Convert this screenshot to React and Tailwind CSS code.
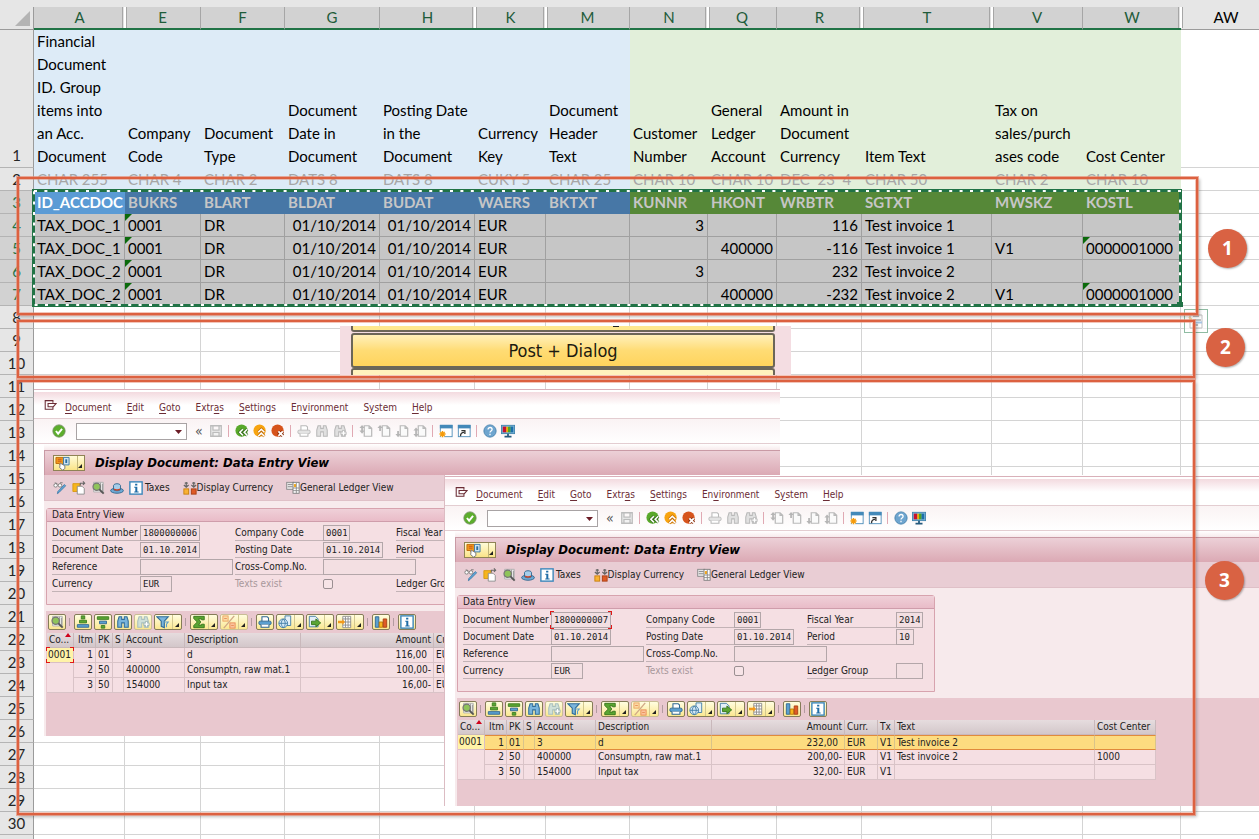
import React from "react";

const COLUMNS = [
  { id: "A", w: "w-[91px]", title: "Financial Document ID. Group items into an Acc. Document", type: "CHAR 255", field: "ID_ACCDOC", hiddenAfter: true },
  { id: "E", w: "w-[76px]", title: "Company Code", type: "CHAR 4", field: "BUKRS" },
  { id: "F", w: "w-[84px]", title: "Document Type", type: "CHAR 2", field: "BLART" },
  { id: "G", w: "w-[95px]", title: "Document Date in Document", type: "DATS 8", field: "BLDAT", right: true },
  { id: "H", w: "w-[95px]", title: "Posting Date in the Document", type: "DATS 8", field: "BUDAT", right: true, hiddenAfter: true },
  { id: "K", w: "w-[71px]", title: "Currency Key", type: "CUKY 5", field: "WAERS", hiddenAfter: true },
  { id: "M", w: "w-[84px]", title: "Document Header Text", type: "CHAR 25", field: "BKTXT" },
  { id: "N", w: "w-[78px]", title: "Customer Number", type: "CHAR 10", field: "KUNNR", green: true, right: true, hiddenAfter: true },
  { id: "Q", w: "w-[69px]", title: "General Ledger Account", type: "CHAR 10", field: "HKONT", green: true, right: true },
  { id: "R", w: "w-[85px]", title: "Amount in Document Currency", type: "DEC  23  4", field: "WRBTR", green: true, right: true, hiddenAfter: true },
  { id: "T", w: "w-[130px]", title: "Item Text", type: "CHAR 50", field: "SGTXT", green: true, hiddenAfter: true },
  { id: "V", w: "w-[91px]", title: "Tax on sales/purch ases code", type: "CHAR 2", field: "MWSKZ", green: true },
  { id: "W", w: "w-[98px]", title: "Cost Center", type: "CHAR 10", field: "KOSTL", green: true, hiddenAfter: true },
];

const DATA = [
  ["TAX_DOC_1", "0001", "DR", "01/10/2014", "01/10/2014", "EUR", "", "3", "", "116", "Test invoice 1", "", ""],
  ["TAX_DOC_1", "0001", "DR", "01/10/2014", "01/10/2014", "EUR", "", "", "400000", "-116", "Test invoice 1", "V1", "0000001000"],
  ["TAX_DOC_2", "0001", "DR", "01/10/2014", "01/10/2014", "EUR", "", "3", "", "232", "Test invoice 2", "", ""],
  ["TAX_DOC_2", "0001", "DR", "01/10/2014", "01/10/2014", "EUR", "", "", "400000", "-232", "Test invoice 2", "V1", "0000001000"],
];

// rows 8 to 30, then one unnumbered row under them
const EMPTY_ROWS = [...Array.from({ length: 23 }, (_, i) => i + 8), ""];

/* ---------- icons ---------- */

const pageShape = <path d="M6 2h5.500l3 3v9H6zM11.500 2v3h3" fill="#fafafa" stroke="#b9b9b9" strokeWidth="1.400" />;
const binoculars = (fill, stroke) => (
  <path d="M3.500 2h3v3h3V2h3l1.500 5v7H9.500V9h-3v5H2V7z" fill={fill} stroke={stroke} strokeWidth="1.200" />
);
const printer = (body, line) => (
  <>
    <path d="M4.500 7V2h6l1.500 1.500V7" fill="#fff" stroke={line} strokeWidth="1.200" />
    <rect x="1" y="7" width="14" height="4" rx="1.500" fill={body} stroke={line} />
    <path d="M3.500 11v3h9v-3" fill="#fff" stroke={line} strokeWidth="1.200" />
  </>
);
const magnifier = (
  <>
    <path d="M3 1.500h11v11H3z" fill="#fff" stroke="#aaa" />
    <path d="M11 2v10M13 3v9" stroke="#888" strokeWidth="1" />
    <circle cx="6.500" cy="6.500" r="4.200" fill="#8fc45a" stroke="#777" strokeWidth="1.400" />
    <path d="M9.500 9.500l5 5" stroke="#555" strokeWidth="2.200" />
  </>
);

const ICONS = {
  exit: <path d="M11 4.500V2H1.500v10.500H11V10M5 5.500h10L11.500 9.500H5z" fill="none" stroke="#6b2c35" strokeWidth="1.300" />,
  check: (
    <>
      <circle cx="8" cy="8" r="7" fill="#5cae2c" stroke="#6f8d5c" />
      <path d="M4.500 8l2.500 3 4.500-5.500" fill="none" stroke="#fff" strokeWidth="2.200" />
    </>
  ),
  save: <path d="M2 2h12v12H2zM4.500 2v5h7V2M4.500 14V9.500h7V14" fill="#f2f2f2" stroke="#bcbcbc" strokeWidth="1.500" />,
  back: (
    <>
      <circle cx="7.500" cy="7.500" r="7" fill="#58a82a" />
      <path d="M9 6l-3.500 3.500L9 13M14 6l-3.500 3.500L14 13" fill="none" stroke="#356d1a" strokeWidth="3.400" />
      <path d="M9 6l-3.500 3.500L9 13M14 6l-3.500 3.500L14 13" fill="none" stroke="#fff" strokeWidth="1.800" />
    </>
  ),
  up: (
    <>
      <circle cx="7.500" cy="7.500" r="7" fill="#f7a410" />
      <path d="M6 9.500L9.500 6 13 9.500M6 14l3.500-3.500L13 14" fill="none" stroke="#c26a00" strokeWidth="3.400" />
      <path d="M6 9.500L9.500 6 13 9.500M6 14l3.500-3.500L13 14" fill="none" stroke="#fff" strokeWidth="1.800" />
    </>
  ),
  cancel: (
    <>
      <circle cx="7.500" cy="7.500" r="7" fill="#d6531b" />
      <path d="M8.500 8.500l5 5M13.500 8.500l-5 5" stroke="#8c2f0a" strokeWidth="4" />
      <path d="M8.500 8.500l5 5M13.500 8.500l-5 5" stroke="#fff" strokeWidth="2" />
    </>
  ),
  printGray: printer("#e3e3e3", "#b9b9b9"),
  print: printer("#5b9fd0", "#2d6692"),
  findGray: binoculars("#e0e0e0", "#b9b9b9"),
  find: binoculars("#78b4dc", "#2f6d9b"),
  findNextGray: (
    <>
      {binoculars("#e0e0e0", "#b9b9b9")}
      <path d="M12 7v7M8.500 10.500h7" stroke="#b9b9b9" strokeWidth="3.500" />
      <path d="M12 8v5M9.500 10.500h5" stroke="#fff" strokeWidth="1.500" />
    </>
  ),
  findNext: (
    <>
      {binoculars("#cfe0d8", "#a9c0bf")}
      <path d="M12 7v7M8.500 10.500h7" stroke="#9db5b5" strokeWidth="3.500" />
      <path d="M12 8v5M9.500 10.500h5" stroke="#fff" strokeWidth="1.500" />
    </>
  ),
  first: <>{pageShape}<path d="M3.500 1l3 3.500h-2v3h2l-3 3.500-3-3.500h2v-3h-2z" fill="#b5b5b5" /></>,
  prev: <>{pageShape}<path d="M3.500 1l3 3.500h-2V8h-2V4.500h-2z" fill="#b5b5b5" /></>,
  next: <>{pageShape}<path d="M3.500 15l3-3.500h-2V8h-2v3.500h-2z" fill="#b5b5b5" /></>,
  last: <>{pageShape}<path d="M3.500 4l3 3.500h-2v4h2l-3 3.500-3-3.500h2v-4h-2z" fill="#b5b5b5" /></>,
  session: (
    <>
      <rect x="1.500" y="1.500" width="13.500" height="13" fill="#fff" stroke="#4a8bb8" />
      <rect x="1" y="1" width="14.500" height="4" fill="#4389b9" />
      <path d="M4 7.500v8M0 11.500h8" stroke="#fff" strokeWidth="4" />
      <path d="M4 8v7M.500 11.500h7M1.500 9l5 5M6.500 9l-5 5" stroke="#f59b0b" strokeWidth="1.600" />
    </>
  ),
  shortcut: (
    <>
      <rect x="1.500" y="1.500" width="13.500" height="13" fill="#fff" stroke="#4a8bb8" />
      <rect x="1" y="1" width="14.500" height="4" fill="#4389b9" />
      <path d="M4 14c0-3 1-4.500 4-4.500M5 7.500h4v4" fill="none" stroke="#333" strokeWidth="1.500" />
    </>
  ),
  help: (
    <>
      <circle cx="8" cy="8" r="7" fill="#6ea5cf" stroke="#4681ad" />
      <path d="M5.800 6.200c0-3 4.600-2.800 4.600 0 0 1.800-2.400 1.800-2.400 3.600M8 11v1.800" fill="none" stroke="#fff" strokeWidth="1.500" />
    </>
  ),
  monitor: (
    <>
      <rect x=".5" y="1.500" width="15" height="9.500" fill="#7bb4d8" stroke="#3f83ad" />
      <path d="M2 3h4v6.500H2z" fill="#c8102e" />
      <path d="M6 3h2v6.500H6z" fill="#f0ab00" />
      <path d="M8 3h3v6.500H8z" fill="#4fa22a" />
      <path d="M11 3h3v6.500h-3z" fill="#1b6ea8" />
      <path d="M8 11v3M4 14.500h8" stroke="#24597c" strokeWidth="2" />
    </>
  ),
  glasses: (
    <>
      <circle cx="3" cy="5" r="2" fill="#fff" stroke="#777" />
      <circle cx="8" cy="5" r="2" fill="#fff" stroke="#777" />
      <path d="M2 2l3 1M8 2l3 0" stroke="#777" />
      <path d="M14.500 5.500L7 13l-2 1.500.500-2.500L13 4z" fill="#5fa6d6" stroke="#2f6f9d" strokeWidth=".8" />
    </>
  ),
  other: (
    <>
      <path d="M1 3h8v9H1z" fill="#f7b51d" stroke="#d9980f" />
      <path d="M6 6h5.500L14 8.500V15H6z" fill="#fff" stroke="#888" />
      <path d="M9.500 5V2.500H14M12.500.5l2 2-2 2" stroke="#666" strokeWidth="1.200" fill="none" />
    </>
  ),
  magnifier,
  hat: (
    <>
      <ellipse cx="8" cy="11" rx="7.300" ry="3" fill="#6fa9d4" stroke="#2c628c" />
      <path d="M4 10V5C5 2.500 11 2.500 12 5v5c-2 1.500-6 1.500-8 0z" fill="#a5cdea" stroke="#2c628c" />
      <path d="M4.500 8.500c2 1.200 5 1.200 7 0v1.700c-2 1.200-5 1.200-7 0z" fill="#c7442c" />
    </>
  ),
  info: (
    <>
      <rect x="1" y="1" width="14" height="14" fill="#fff" stroke="#3c87bb" strokeWidth="1.600" />
      <path d="M7 3h2.500v2H7zM6 6.500h3.500V12H11v1.200H6V12h1.200V7.800H6z" fill="#1f6ca6" />
    </>
  ),
  currency: (
    <>
      <rect x="1" y="9" width="5.500" height="6" fill="#f9b233" stroke="#c77e0a" />
      <rect x="9.500" y="9" width="5.500" height="6" fill="#df5a26" stroke="#a63d11" />
      <path d="M3.700 1v6M1 4.500L3.700 7l2.700-2.500M12.300 1v6M9.600 4.500L12.300 7 15 4.500M2 2.500h3.500M10.500 2.500H14" stroke="#666" strokeWidth="1.400" fill="none" />
    </>
  ),
  ledger: (
    <>
      <rect x=".8" y="1.500" width="8" height="8" fill="#e6e6e6" stroke="#888" />
      <path d="M2 4h5.500M2 6.500h5.500" stroke="#888" />
      <rect x="8" y="1.500" width="7" height="12.500" fill="#fff" stroke="#777" />
      <path d="M9 3.500h2.500V7H9z" fill="#f4a91c" />
      <path d="M8 8h7M8 11h7M11.800 2v12" stroke="#888" />
    </>
  ),
  bpm: (
    <>
      <path d="M1 1.500h8v6l-2.500 3.500L4.500 8H1z" fill="#f39a1c" stroke="#c06a08" />
      <path d="M3 3.500h4M3 5.500h4" stroke="#c8541a" />
      <path d="M9 1.500h6v8H9z" fill="#cfe4f2" stroke="#3b79a5" />
      <path d="M11 3.500h2v4h-2z" fill="#2e6d9c" />
      <path d="M5.500 7.500l5 3v3L8 15l-3-2.500z" fill="#fff" stroke="#777" />
    </>
  ),
  asc: (
    <>
      <path d="M6 1h4v3.500H6z" fill="#5aa532" stroke="#3c7d1f" />
      <path d="M4 6h8v3H4z" fill="#5aa532" stroke="#3c7d1f" />
      <path d="M1.500 11h13v3h-13z" fill="#5b9fd0" stroke="#2d6692" />
    </>
  ),
  desc: (
    <>
      <path d="M1.500 2h13v3h-13z" fill="#5aa532" stroke="#3c7d1f" />
      <path d="M4 7h8v3H4z" fill="#5b9fd0" stroke="#2d6692" />
      <path d="M6 12h4v3H6z" fill="#5aa532" stroke="#3c7d1f" />
    </>
  ),
  filter: (
    <>
      <path d="M1 2h13L9.500 7v7.500L6 13V7z" fill="#7cb6dc" stroke="#2f6d9b" strokeWidth="1.300" />
      <path d="M9 8h5l-2 2.500V14" fill="none" stroke="#5f9fc8" strokeWidth="1.200" />
    </>
  ),
  sum: <path d="M2 1.500h12v4h-3v-1H7.500L10 8l-2.500 3.500H11v-1h3v4H2V12l4-4-4-4z" fill="#5aa532" stroke="#35731a" />,
  subtotal: (
    <>
      <rect x="1" y="1" width="6" height="6" fill="#fbd9a4" stroke="#eba45c" />
      <rect x="9" y="9" width="6" height="6" fill="#fbc39c" stroke="#e88b55" />
      <path d="M14 1L2 15" stroke="#d0a886" strokeWidth="1.500" />
      <path d="M2.500 4h3M10.500 12h3" stroke="#e88b55" />
    </>
  ),
  view: (
    <>
      <path d="M8 1h6.500v11H8z" fill="#e4f0f8" stroke="#3b79a5" />
      <circle cx="6" cy="9.500" r="5" fill="#d4e8f5" stroke="#3b79a5" />
      <path d="M1 9.500h10M6 4.500c-3 3-3 7 0 10M6 4.500c3 3 3 7 0 10" fill="none" stroke="#3b79a5" />
    </>
  ),
  exportFile: (
    <>
      <path d="M1.500 1.500h7l3 3v9h-10z" fill="#e4f0f8" stroke="#3b79a5" />
      <path d="M4 7h5V4.500l5.500 4.500L9 13.500V11H4z" fill="#5aa532" stroke="#35731a" />
    </>
  ),
  layout: (
    <>
      <path d="M5.500 1.500h9v13h-9z" fill="#fff" stroke="#888" />
      <path d="M5.500 4.500h9M5.500 8h9M5.500 11.500h9M8.500 2v12M11.500 2v12" stroke="#888" />
      <path d="M0 6.500h5V4.500L8 8l-3 3.500v-2H0z" fill="#f39a1c" />
    </>
  ),
  chart: (
    <>
      <path d="M1.500 2h4v12h-4z" fill="#5b9fd0" stroke="#2d6692" />
      <path d="M6 8h4v6H6z" fill="#f7b51d" stroke="#b97708" />
      <path d="M10.500 4.500h4V14h-4z" fill="#df5a26" stroke="#a63d11" />
    </>
  ),
};

function Icon({ name, className = "size-[14px]" }) {
  return (
    <svg viewBox="0 0 16 16" className={`${className} shrink-0`} aria-hidden="true">
      {ICONS[name]}
    </svg>
  );
}

/* ---------- spreadsheet ---------- */

function RowHead({ n, selected }) {
  return (
    <th
      scope="row"
      className={`border-r border-b border-r-[#9b9b9b] border-b-[#b4b4b4] text-center align-bottom font-normal ${
        selected ? "bg-[#d2d2d2] text-[#217346]" : "bg-[#e6e6e6] text-[#262626]"
      }`}
    >
      {n}
    </th>
  );
}

function Sheet() {
  return (
    <table className="w-full table-fixed border-separate border-spacing-0 text-left leading-[22px]">
      <colgroup>
        <col className="w-[34px]" />
        {COLUMNS.map((c) => (
          <col key={c.id} className={c.w} />
        ))}
        <col />
      </colgroup>
      <thead>
        <tr className="h-[23px]">
          <th className="border-r border-b border-[#9b9b9b] bg-[#e6e6e6] p-0 pr-[3px]">
            <svg viewBox="0 0 15 15" className="ml-auto size-[15px]" aria-hidden="true">
              <path d="M15 0v15H0z" fill="#b4b4b4" />
            </svg>
          </th>
          {COLUMNS.map((c) => (
            <th
              key={c.id}
              scope="col"
              className={`relative border-b-2 border-b-[#217346] bg-[#d2d2d2] p-0 text-center font-normal leading-[21px] text-[#1e5c3a] ${
                c.hiddenAfter ? "" : "border-r border-r-[#a6a6a6]"
              }`}
            >
              {c.id}
              {c.hiddenAfter && (
                <span className="absolute top-0 -right-[2px] z-10 h-[21px] w-[5px] border-x border-[#a6a6a6] bg-linear-to-r from-[#d2d2d2] via-white to-white" />
              )}
            </th>
          ))}
          <th scope="col" className="border-b border-b-[#9b9b9b] bg-[#e6e6e6] pr-0 pl-3 text-center align-top font-normal leading-[21px]">
            AW
          </th>
        </tr>
      </thead>
      <tbody>
        <tr className="h-[138px] align-bottom leading-[23px]">
          <RowHead n={1} />
          {COLUMNS.map((c) => (
            <td key={c.id} className={`pr-[5px] pl-[3px] ${c.green ? "bg-[#e2efda]" : "bg-[#ddebf7]"}`}>
              {c.title}
            </td>
          ))}
          <td className="border-b border-[#d4d4d4]" />
        </tr>
        <tr className="h-[23px] align-top">
          <RowHead n={2} />
          {COLUMNS.map((c) => (
            <td key={c.id} className={`pl-[3px] whitespace-pre text-[#a6a6a6] ${c.green ? "bg-[#e2efda]" : "bg-[#ddebf7]"}`}>
              {c.type}
            </td>
          ))}
          <td className="border-b border-[#d4d4d4]" />
        </tr>
        <tr className="h-[23px] align-top font-bold text-[#c6c6c6]">
          <RowHead n={3} selected />
          {COLUMNS.map((c, i) => (
            <td
              key={c.id}
              className={`pl-[3px] ${i === 0 ? "bg-[#5b9bd5] text-white" : c.green ? "bg-[#568838]" : "bg-[#4777a6]"}`}
            >
              {c.field}
            </td>
          ))}
          <td className="border-b border-[#d4d4d4]" />
        </tr>
        {DATA.map((row, r) => (
          <tr key={r} className="h-[23px]">
            <RowHead n={r + 4} selected />
            {row.map((value, i) => (
              <td
                key={i}
                className={`relative border-r border-b border-[#a0a0a0] bg-[#c6c6c6] px-[3px] whitespace-nowrap ${
                  COLUMNS[i].right ? "text-right" : ""
                }`}
              >
                {(i === 1 || (i === 12 && value)) && (
                  <svg viewBox="0 0 7 7" className="absolute top-0 left-0 size-[7px]" aria-hidden="true">
                    <path d="M0 0h7L0 7z" fill="#0b6a0b" />
                  </svg>
                )}
                {value}
              </td>
            ))}
            <td className="border-b border-[#d4d4d4]" />
          </tr>
        ))}
        {EMPTY_ROWS.map((n) => (
          <tr key={n} className="h-[23px]">
            <RowHead n={n} />
            {COLUMNS.map((c) => (
              <td key={c.id} className="border-r border-b border-[#d4d4d4]" />
            ))}
            <td className="border-b border-[#d4d4d4]" />
          </tr>
        ))}
      </tbody>
    </table>
  );
}

// Copied range with the dashed outline
function CopyOutline() {
  return (
    <div className="absolute top-[189px] left-[32px] h-[118px] w-[1151px]">
      <svg className="size-full" aria-hidden="true">
        <rect x="1.5" y="1.5" width="1147" height="115" fill="none" stroke="#217346" strokeWidth="3" />
        <rect x="2" y="2" width="1146" height="114" fill="none" stroke="#fff" strokeWidth="2" strokeDasharray="3 7.400" />
        <rect x="1145" y="113" width="6" height="5" fill="#217346" />
      </svg>
    </div>
  );
}

function PasteOptions() {
  return (
    <button aria-label="Paste options" className="absolute top-[309px] left-[1184px] flex size-6 items-center justify-center border border-[#8fbca3] bg-white/70">
      <svg viewBox="0 0 16 16" className="size-4 opacity-60" aria-hidden="true">
        <path d="M2 2h12v13H2z" fill="#fff" stroke="#999" />
        <path d="M5 1h6v3H5z" fill="#999" />
        <path d="M5 7h8M5 12h5" stroke="#777" strokeWidth="1.500" />
        <path d="M7 9.500h7" stroke="#6c9ed1" strokeWidth="2" />
        <path d="M1 4l3 3M1 8l3-1" stroke="#eeb35e" strokeWidth="2" />
      </svg>
    </button>
  );
}

function PostDialog() {
  return (
    <div className="absolute top-[326px] left-[340px] flex h-[49px] w-[451px] flex-col overflow-hidden bg-[#f4dde2] pr-4 pl-[11px]">
      <div className="h-[6px] shrink-0 rounded-b-[3px] border-2 border-t-0 border-[#6b6658] bg-[#ffe88f]">
        <div className="ml-[260px] h-px w-[6px] bg-[#222]" />
      </div>
      <button className="mt-px h-[35px] shrink-0 rounded-[3px] border-2 border-[#6b6658] bg-linear-to-b from-[#fff0b8] via-[#ffdc74] via-50% to-[#ffd45c] font-['DejaVu_Sans_Condensed','DejaVu_Sans',sans-serif] text-[18px] leading-[31px] text-[#1c1a10]">
        Post + Dialog
      </button>
      <div className="h-5 shrink-0 rounded-t-[3px] border-2 border-b-0 border-[#6b6658] bg-[#fff2bd]" />
    </div>
  );
}

/* ---------- SAP windows ---------- */

const MENU = [
  ["", "D", "ocument"],
  ["", "E", "dit"],
  ["", "G", "oto"],
  ["Extr", "a", "s"],
  ["", "S", "ettings"],
  ["En", "v", "ironment"],
  ["S", "y", "stem"],
  ["", "H", "elp"],
];

const TOOLBAR = [
  ["save"],
  ["back", "up", "cancel"],
  ["printGray", "findGray", "findNextGray"],
  ["first", "prev", "next", "last"],
  ["session", "shortcut"],
  ["help", "monitor"],
];

const GRID_TOOLS = [
  [["magnifier"]],
  [["asc"], ["desc"], ["find"], ["findNext"], ["filter", true]],
  [["sum", true], ["subtotal", true]],
  [["print"], ["view", true], ["exportFile", true], ["layout", true]],
  [["chart"]],
  [["info"]],
];

const GRID_COLS = [
  { label: "Co...", w: "w-[27px]" },
  { label: "Itm", w: "w-[22px]", right: true },
  { label: "PK", w: "w-[17px]" },
  { label: "S", w: "w-[11px]" },
  { label: "Account", w: "w-[61px]" },
  { label: "Description", w: "w-[116px]" },
  { label: "Amount", w: "w-[133px]", right: true },
  { label: "Curr.", w: "w-[33px]" },
  { label: "Tx", w: "w-[17px]" },
  { label: "Text", w: "w-[200px]" },
  { label: "Cost Center", w: "w-[61px]" },
];

function Brackets() {
  return (
    <span className="pointer-events-none absolute -inset-px">
      <span className="absolute top-0 left-0 size-[4px] border-t border-l border-[#e01818]" />
      <span className="absolute top-0 right-0 size-[4px] border-t border-r border-[#e01818]" />
      <span className="absolute bottom-0 left-0 size-[4px] border-b border-l border-[#e01818]" />
      <span className="absolute right-0 bottom-0 size-[4px] border-r border-b border-[#e01818]" />
    </span>
  );
}

function Field({ id, label, value = "", width = "w-[60px]", focused, bare }) {
  return (
    <>
      <label htmlFor={id} className={`h-4 whitespace-nowrap ${bare ? "text-[#a8989b]" : "border-b border-[#c3b3b6]"}`}>
        {label}
      </label>
      {bare ? (
        <input id={id} type="checkbox" className="my-[3px] block size-[10px] appearance-none rounded-[2px] border border-[#9b8f92] bg-[#f7e4e7]" />
      ) : (
        <span className={`relative block h-4 ${width}`}>
          <input
            id={id}
            readOnly
            defaultValue={value}
            className="block h-4 w-full border border-[#b3a6a9] bg-[#f3dfe2] px-[2px] font-['DejaVu_Sans_Mono',monospace] text-[9px] text-[#222] outline-none"
          />
          {focused && <Brackets />}
        </span>
      )}
    </>
  );
}

function DataEntryForm({ prefix, number, year, period, focused }) {
  return (
    <section className="mt-[7px] mr-4 ml-[2px] w-[478px] rounded-t-[3px] border border-[#d7a3ae] bg-[#f5dfe3] pb-3">
      <h2 className="h-[13px] border-b border-[#cf9dab] bg-linear-to-b from-[#efd0d8] to-[#e9bcc8] pl-[5px] leading-[12px]">
        Data Entry View
      </h2>
      <div className="grid grid-cols-[88px_95px_88px_73px_89px_1fr] gap-y-px pt-[3px] pl-[5px] leading-[15px]">
        <Field id={`${prefix}-number`} label="Document Number" value={number} focused={focused} />
        <Field id={`${prefix}-company`} label="Company Code" value="0001" width="w-[27px]" />
        <Field id={`${prefix}-year`} label="Fiscal Year" value={year} width="w-[27px]" />
        <Field id={`${prefix}-date`} label="Document Date" value="01.10.2014" />
        <Field id={`${prefix}-posting`} label="Posting Date" value="01.10.2014" />
        <Field id={`${prefix}-period`} label="Period" value={period} width="w-[18px]" />
        <Field id={`${prefix}-reference`} label="Reference" width="w-[93px]" />
        <Field id={`${prefix}-cross`} label="Cross-Comp.No." width="w-[93px]" />
        <span />
        <span />
        <Field id={`${prefix}-currency`} label="Currency" value="EUR" width="w-8" />
        <Field id={`${prefix}-texts`} label="Texts exist" bare />
        <Field id={`${prefix}-ledger`} label="Ledger Group" width="w-[27px]" />
      </div>
    </section>
  );
}

function ItemGrid({ cols, rows, highlight }) {
  return (
    <table className="mt-[3px] table-fixed border-separate border-spacing-0 text-left whitespace-nowrap">
      <colgroup>
        {cols.map((c) => (
          <col key={c.label} className={c.w} />
        ))}
      </colgroup>
      <thead>
        <tr className="h-[15px]">
          {cols.map((c, i) => (
            <th
              key={c.label}
              scope="col"
              className={`relative overflow-hidden border-r border-b border-[#c9b8bb] bg-linear-to-b from-[#e6dcde] to-[#d3c7ca] px-[2px] font-normal leading-[14px] ${
                c.right ? "text-right" : ""
              }`}
            >
              {c.label}
              {i === 0 && (
                <svg viewBox="0 0 6 4" className="absolute top-0 right-[2px] h-[4px] w-[6px]" aria-hidden="true">
                  <path d="M3 0l3 4H0z" fill="#d0021b" />
                </svg>
              )}
            </th>
          ))}
        </tr>
      </thead>
      <tbody>
        {rows.map((row, r) => {
          const hot = highlight && r === 0;
          return (
            <tr key={r} className="h-[15px]">
              {r === 0 && (
                <td className="relative border-r border-b border-[#d9bfc4] bg-[#fff3a8] px-px leading-[14px]">
                  0001
                  {!highlight && <Brackets />}
                </td>
              )}
              {r === 1 && <td rowSpan={2} className="border-r border-b border-[#d9c3c7] bg-[#f5dfe3]" />}
              {row.map((value, i) => (
                <td
                  key={i}
                  className={`overflow-hidden border-r px-[2px] ${cols[i + 1].right ? "text-right" : ""} ${
                    hot
                      ? "border-y border-y-[#e08a3c] border-r-[#d9c48a] bg-[#fddc80] leading-[13px]"
                      : "border-b border-[#d9c3c7] bg-[#f5dfe3] leading-[14px]"
                  } ${i === 5 && !value.endsWith("-") ? "pr-[6px]" : ""}`}
                >
                  {value}
                </td>
              ))}
            </tr>
          );
        })}
      </tbody>
    </table>
  );
}

function DropMark() {
  return (
    <svg viewBox="0 0 4 4" className="mt-auto mr-[2px] mb-[2px] ml-auto size-[4px]" aria-hidden="true">
      <path d="M4 0v4H0z" fill="#222" />
    </svg>
  );
}

function SapWindow({ className, prefix, cols, rows, highlight, form }) {
  return (
    <section
      className={`absolute flex flex-col overflow-hidden bg-white font-['DejaVu_Sans_Condensed','DejaVu_Sans',sans-serif] text-[10px] text-[#222] ${className}`}
    >
      <div className="border-t border-[#d9b0b9] pt-[2px]">
        <nav className="flex h-[27px] items-center border-b border-[#e3cdd1] bg-linear-to-b from-[#f3dadf] to-white to-50% pt-1 pl-[10px] text-[#6b2c35]">
          <Icon name="exit" className="mb-1 size-[13px]" />
          <div className="ml-2 flex gap-[15px]">
            {MENU.map(([before, key, after]) => (
              <button key={before + key + after}>
                {before}
                <span className="underline underline-offset-2">{key}</span>
                {after}
              </button>
            ))}
          </div>
        </nav>
      </div>
      <div className="flex h-[25px] shrink-0 items-center border-b border-[#e3cdd1] bg-linear-to-b from-[#faf3f4] to-white pl-[18px]">
        <button aria-label="Enter" className="flex">
          <Icon name="check" />
        </button>
        <span className="relative ml-[10px] block">
          <select aria-label="Command" className="block h-[17px] w-[111px] appearance-none border border-[#a8a3a4] bg-white">
            <option></option>
          </select>
          <svg viewBox="0 0 7 4" className="pointer-events-none absolute top-[7px] right-[5px] h-[4px] w-[7px]" aria-hidden="true">
            <path d="M0 0h7L3.500 4z" fill="#6b1c26" />
          </svg>
        </span>
        <button className="mr-[6px] ml-2 text-[14px] leading-none text-[#555]">«</button>
        <div className="flex items-center gap-1">
          {TOOLBAR.map((group, g) => (
            <React.Fragment key={g}>
              {g > 0 && <span className="mx-px h-3 w-[2px] border-l border-[#e0a9b3]" />}
              {group.map((name) => (
                <button key={name} aria-label={name} className="flex">
                  <Icon name={name} />
                </button>
              ))}
            </React.Fragment>
          ))}
        </div>
      </div>
      <div className="ml-[10px] flex grow flex-col bg-[#f7eaec]">
        <div className="h-[6px] shrink-0 bg-linear-to-b from-white to-[#f7eaec]" />
        <header className="flex h-[25px] shrink-0 items-center border-t border-l border-[#c99aa5] bg-linear-to-b from-[#ecd0d7] to-[#dba9b4] pl-2">
          <button aria-label="Services" className="flex h-4 w-8 items-center border border-[#8f8355] bg-linear-to-b from-[#fffbd8] to-[#fbe487]">
            <Icon name="bpm" className="mx-px size-[15px]" />
            <span className="ml-[6px] h-full border-l border-[#c2b67a]" />
            <DropMark />
          </button>
          <h1 className="ml-[10px] text-[13px] font-bold text-black italic">Display Document: Data Entry View</h1>
        </header>
        <div className="flex h-[26px] shrink-0 items-center border-b border-l border-[#dfc0c7] bg-[#e9cdd4] pl-2">
          <div className="flex items-center gap-[5px]">
            {["glasses", "other", "magnifier", "hat"].map((name) => (
              <button key={name} aria-label={name} className="flex">
                <Icon name={name} />
              </button>
            ))}
            <button className="flex items-center gap-[2px]">
              <Icon name="info" />
              Taxes
            </button>
          </div>
          <button className="ml-[13px] flex items-center">
            <Icon name="currency" />
            Display Currency
          </button>
          <button className="ml-[13px] flex items-center">
            <Icon name="ledger" />
            General Ledger View
          </button>
        </div>
        <DataEntryForm prefix={prefix} {...form} />
        <div className="mt-[6px] ml-[2px] grow bg-[#e9c8cf] pt-[3px]">
          <div className="flex items-center gap-[2px] pl-[2px]">
            {GRID_TOOLS.map((group, g) => (
              <React.Fragment key={g}>
                {g > 0 && <span className="mr-px ml-px h-2 w-[2px] border-l border-[#b39ba0]" />}
                {group.map(([name, split]) => (
                  <button
                    key={name}
                    aria-label={name}
                    className={`flex h-4 items-center rounded-[2px] border bg-linear-to-b from-[#fffde0] to-[#fbe78f] pl-px ${
                      name === "findNext" || name === "subtotal" ? "border-[#c9bd95]" : "border-[#857c58]"
                    } ${split ? "w-7" : "w-[18px]"}`}
                  >
                    <Icon name={name} />
                    {split && (
                      <>
                        <span className="ml-[2px] h-full border-l border-[#d3c88f]" />
                        <DropMark />
                      </>
                    )}
                  </button>
                ))}
              </React.Fragment>
            ))}
          </div>
          <div className="flex pl-px">
            <ItemGrid cols={cols} rows={rows} highlight={highlight} />
          </div>
        </div>
      </div>
    </section>
  );
}

/* ---------- callouts ---------- */

function Frame({ className }) {
  return (
    <div
      className={`pointer-events-none absolute left-[17px] border-2 border-[#dc6140] shadow-[0_0_0_1px_rgba(232,140,115,0.7),inset_0_0_0_1px_rgba(232,140,115,0.5),2px_2px_3px_rgba(0,0,0,0.25)] ${className}`}
    />
  );
}

function Badge({ n, className }) {
  return (
    <div
      className={`absolute flex size-[39px] items-center justify-center rounded-full bg-[#d96243] font-['Open_Sans',sans-serif] text-[19px] font-bold text-white shadow-[1px_1px_2px_rgba(0,0,0,0.3)] ${className}`}
    >
      {n}
    </div>
  );
}

export default function App() {
  return (
    <main className="relative h-screen overflow-hidden bg-white font-['Lato','Liberation_Sans',sans-serif] text-[15px] text-black [&_td]:py-0 [&_th]:py-0">
      <div className="h-[7px] bg-[#e6e6e6]" />
      <Sheet />
      <CopyOutline />
      <PasteOptions />
      <PostDialog />

      <SapWindow
        className="top-[389px] left-[34px] h-[347px] w-[746px]"
        prefix="first"
        cols={GRID_COLS.slice(0, 8)}
        rows={[
          ["1", "01", "", "3", "d", "116,00", "EUR"],
          ["2", "50", "", "400000", "Consumptn, raw mat.1", "100,00-", "EUR"],
          ["3", "50", "", "154000", "Input tax", "16,00-", "EUR"],
        ]}
        form={{ number: "1800000006" }}
      />
      <SapWindow
        className="top-[475px] right-0 left-[444px] h-[331px] border-l border-[#dcbcc3] pt-px"
        prefix="second"
        highlight
        cols={GRID_COLS}
        rows={[
          ["1", "01", "", "3", "d", "232,00", "EUR", "V1", "Test invoice 2", ""],
          ["2", "50", "", "400000", "Consumptn, raw mat.1", "200,00-", "EUR", "V1", "Test invoice 2", "1000"],
          ["3", "50", "", "154000", "Input tax", "32,00-", "EUR", "V1", "", ""],
        ]}
        form={{ number: "1800000007", year: "2014", period: "10", focused: true }}
      />

      <Frame className="top-[177px] h-[138px] w-[1181px]" />
      <Frame className="top-[320px] h-[58px] w-[1178px]" />
      <Frame className="top-[380px] h-[435px] w-[1178px]" />
      <Badge n={1} className="top-[229px] left-[1208px]" />
      <Badge n={2} className="top-[328px] left-[1206px]" />
      <Badge n={3} className="top-[561px] left-[1205px]" />
    </main>
  );
}
